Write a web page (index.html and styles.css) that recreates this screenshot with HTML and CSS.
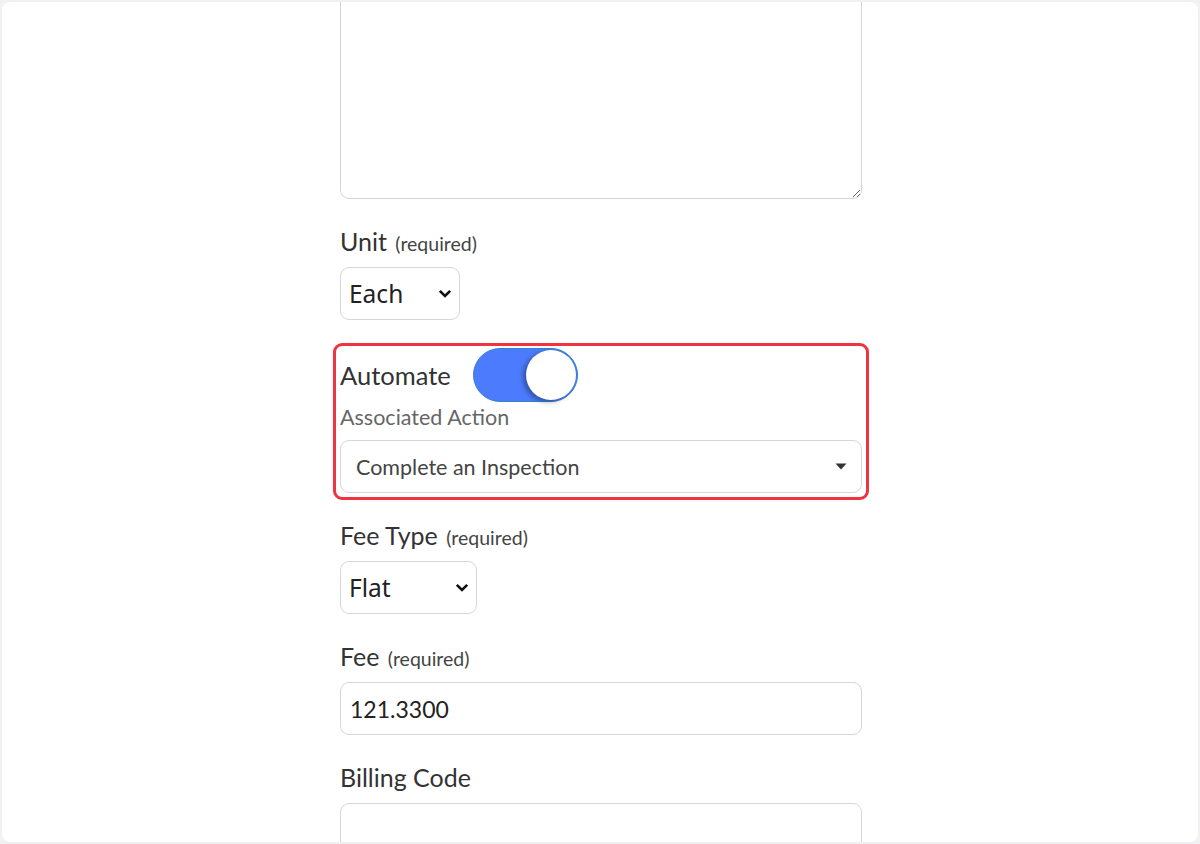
FILE: index.html
```
<!DOCTYPE html>
<html lang="en">
<head>
    <meta charset="UTF-8">
    <title>Edit Fee</title>
    <link rel="stylesheet" href="styles.css">
</head>
<body>
    <div class="card">
        <form class="fee-form">
            <textarea class="notes"></textarea>

            <div class="field">
                <label class="label">Unit <span class="req">(required)</span></label>
                <div class="select unit-select">
                    <span>Each</span>
                    <svg class="chevron" width="14" height="9" viewBox="0 0 14 9"><path d="M1.8 1.8l5.2 5.2 5.2-5.2" fill="none" stroke="#111" stroke-width="2.6"/></svg>
                </div>
            </div>

            <div class="highlight">
                <div class="automate-row">
                    <span class="label">Automate</span>
                    <div class="toggle on"><span class="knob"></span></div>
                </div>
                <div class="sub-label">Associated Action</div>
                <div class="select action-select">
                    <span>Complete an Inspection</span>
                    <svg class="caret" width="12" height="7" viewBox="0 0 12 7"><path d="M0.5 0.5h11L6 6.5z" fill="#333"/></svg>
                </div>
            </div>

            <div class="field">
                <label class="label">Fee Type <span class="req">(required)</span></label>
                <div class="select type-select">
                    <span>Flat</span>
                    <svg class="chevron" width="14" height="9" viewBox="0 0 14 9"><path d="M1.8 1.8l5.2 5.2 5.2-5.2" fill="none" stroke="#111" stroke-width="2.6"/></svg>
                </div>
            </div>

            <div class="field">
                <label class="label">Fee <span class="req">(required)</span></label>
                <input class="text-input" type="text" value="121.3300">
            </div>

            <div class="field">
                <label class="label">Billing Code</label>
                <input class="text-input" type="text">
            </div>
        </form>
    </div>
</body>
</html>
```

FILE: styles.css
```
* {
    box-sizing: border-box;
}

body {
    margin: 0;
    background: #f0f0f5;
    font-family: 'Lato', 'Open Sans', sans-serif;
    color: #333;
}

.card {
    margin: 2px;
    height: 840px;
    background: #fff;
    border-radius: 8px;
    overflow: hidden;
}

.fee-form {
    width: 522px;
    margin: -30px 0 0 338px;
}

.notes {
    display: block;
    width: 100%;
    height: 227px;
    border: 1.5px solid #d4d4d4;
    border-radius: 9px;
    resize: vertical;
    font-family: inherit;
}

.field {
    margin-top: 28px;
}

.label {
    display: block;
    font-size: 25px;
    line-height: 29px;
    color: #333;
    margin-bottom: 11px;
}

.req {
    font-size: 19.5px;
    line-height: 1;
    color: #444;
    margin-left: 2px;
}

.select {
    display: flex;
    align-items: center;
    justify-content: space-between;
    height: 53px;
    border: 1.5px solid #d6d6d6;
    border-radius: 9px;
    background: #fff;
    padding: 0 7px 0 8px;
    font-family: 'Noto Sans', 'Lato', sans-serif;
    font-size: 24.5px;
    color: #222;
}

.unit-select {
    width: 120px;
}

.type-select {
    width: 137px;
}

.highlight {
    margin: 23px -7px 0;
    border: 3px solid #ef3340;
    border-radius: 9px;
    padding: 2px 4px 4px;
}

.automate-row {
    display: flex;
    align-items: center;
    gap: 22px;
    height: 54px;
}

.automate-row .label {
    margin: 0;
    font-size: 25.5px;
}

.toggle {
    width: 105px;
    height: 54px;
    border-radius: 27px;
    border: 1px solid #2f86c9;
    background: #4c7bfd;
    display: flex;
    align-items: center;
    justify-content: flex-end;
    padding: 1px;
}

.knob {
    width: 50px;
    height: 50px;
    border-radius: 50%;
    background: #fff;
    box-shadow: -3px 2px 5px rgba(0, 0, 0, 0.35);
}

.sub-label {
    font-size: 21.5px;
    line-height: 25px;
    color: #666;
    margin: 3px 0 10px;
}

.action-select {
    font-family: 'Lato', sans-serif;
    font-size: 21.5px;
    color: #444;
    padding: 0 14px 0 15px;
}

.highlight + .field {
    margin-top: 21px;
}

.text-input {
    display: block;
    width: 100%;
    height: 53px;
    border: 1.5px solid #d6d6d6;
    border-radius: 9px;
    padding: 0 9px;
    font-family: 'Lato', sans-serif;
    font-size: 23px;
    color: #222;
    outline: none;
}
```
